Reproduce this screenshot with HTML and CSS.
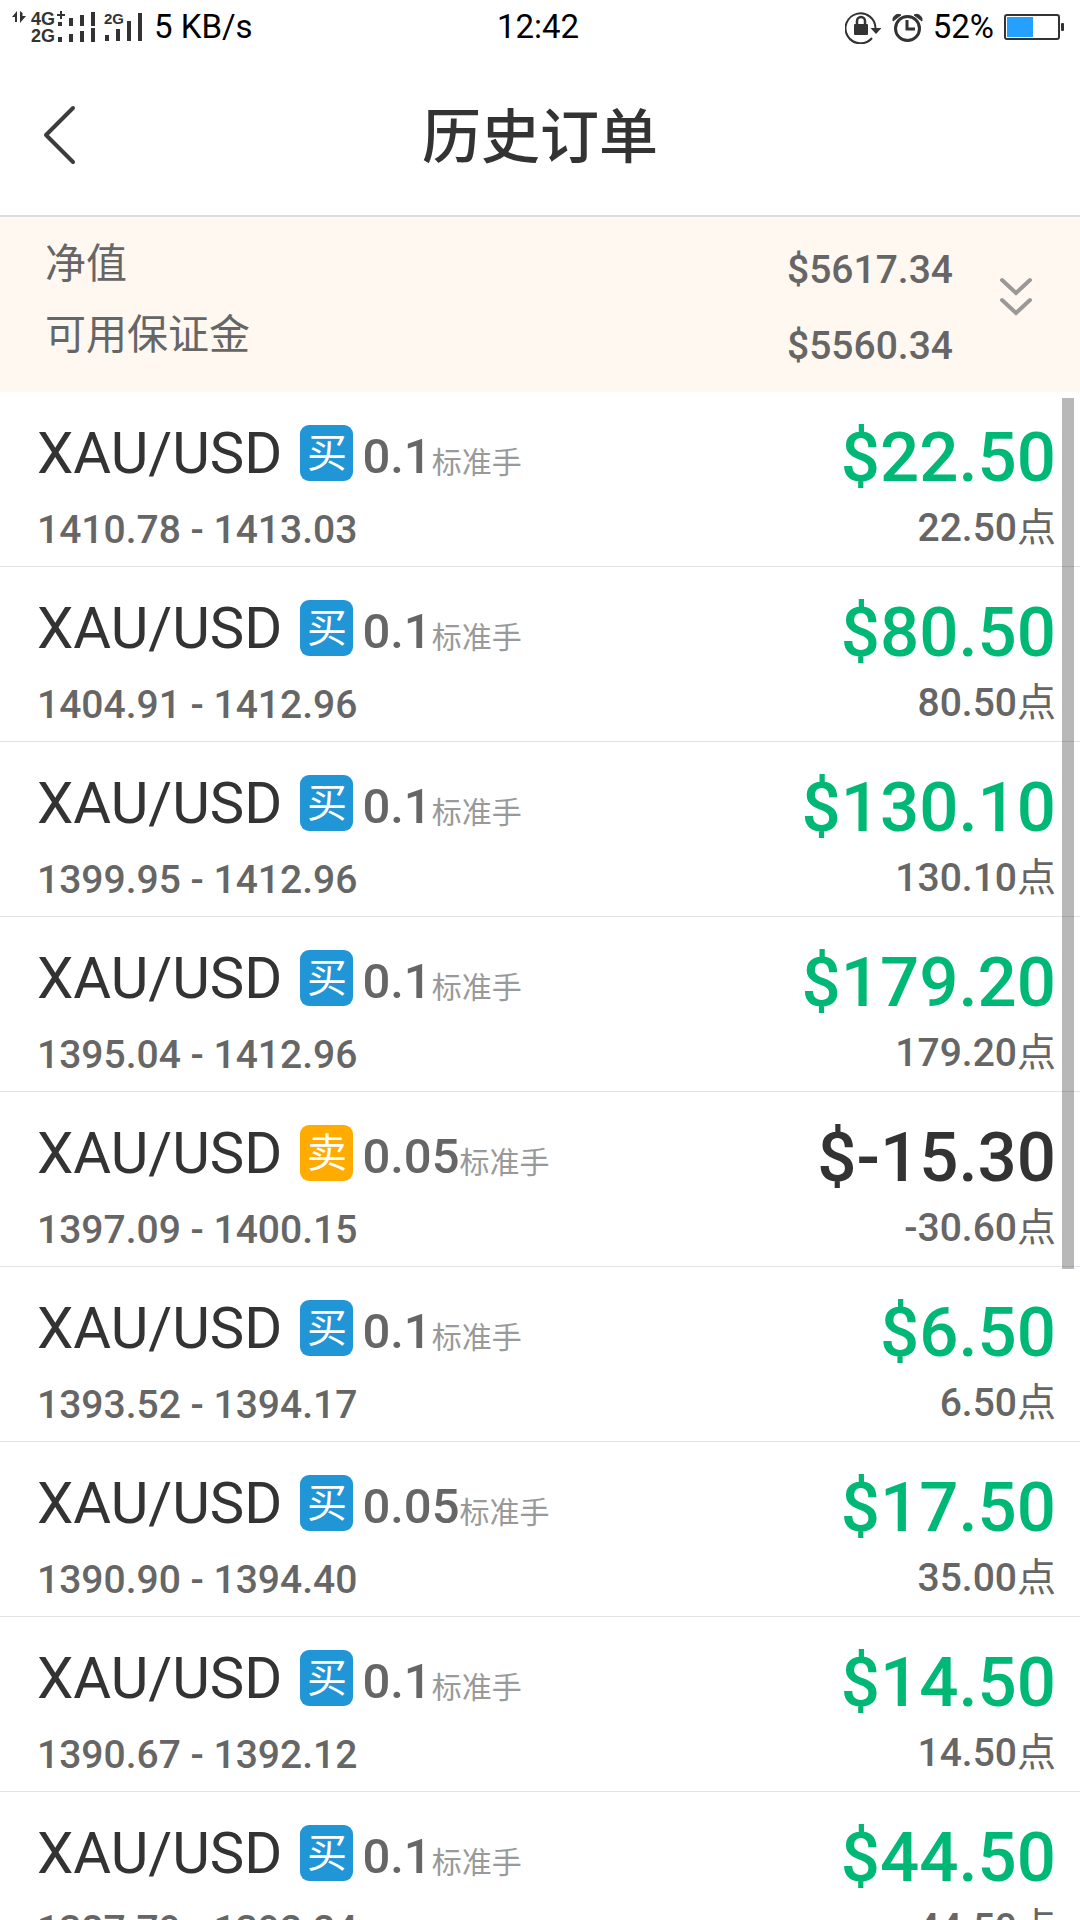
FILE: index.html
```html
<!DOCTYPE html>
<html lang="zh-CN">
<head>
<meta charset="utf-8">
<meta name="viewport" content="width=device-width">
<title>历史订单</title>
<link rel="stylesheet" href="styles.css">
</head>
<body>
<div class="status">
  <div class="status-side">
    <svg class="signal" width="132" height="42" viewBox="12 6 132 42" fill="#333">
      <path d="M12 17l5-6v11h-2v-5zM20 11v12l6-7h-3.500v-3z"/>
      <text x="31" y="25" class="net">4G</text>
      <text x="31" y="42" class="net">2G</text>
      <path d="M57 14h8v2h-8zM60 11h2v8h-2z"/>
      <path d="M58 22h4v4h-4zM69 18h4v8h-4zM80 15h4v11h-4zM91 12h4v14h-4zM58 37h4v5h-4zM69 34h4v8h-4zM80 31h4v11h-4zM91 28h4v14h-4z"/>
      <text x="104" y="24" class="net-small">2G</text>
      <path d="M105 35h4v6h-4zM116 29h4v12h-4zM127 21h4v20h-4zM138 13h4v28h-4z"/>
    </svg>
    <span>5 KB/s</span>
  </div>
  <time class="clock">12:42</time>
  <div class="status-side status-right">
    <svg width="36" height="34" viewBox="841 10 36 34">
      <path d="M868 38A15 15 0 1 1 871.500 29" fill="none" stroke="#333" stroke-width="2"/>
      <path d="M866.500 28h11l-5.500 6z" fill="#333"/>
      <rect x="850" y="24" width="14" height="11" rx="1" fill="#333"/>
      <path d="M853 25v-4a4 4 0 0 1 8 0v4" fill="none" stroke="#333" stroke-width="2.500"/>
    </svg>
    <svg width="32" height="32" viewBox="888 11 32 32" fill="none" stroke="#333">
      <circle cx="904.500" cy="28.500" r="12" stroke-width="3"/>
      <path d="M904 20v9h8" stroke-width="3"/>
      <path d="M890 21a5.500 5.500 0 0 1 8-6zM919 21a5.500 5.500 0 0 0-8-6z" fill="#333" stroke-width="1"/>
    </svg>
    <span>52%</span>
    <svg width="60" height="28" viewBox="1004 13 60 28">
      <rect x="1005" y="15" width="54" height="24" rx="2" fill="none" stroke="#333" stroke-width="2"/>
      <rect x="1007" y="17" width="26" height="20" fill="#26a0ff"/>
      <rect x="1061" y="23" width="3" height="8" rx="1" fill="#333"/>
    </svg>
  </div>
</div>

<header class="header">
  <button class="back" type="button" aria-label="返回">
    <svg width="36" height="62" viewBox="0 0 36 62" fill="none" stroke="#3c3c3c" stroke-width="4" stroke-linecap="round" stroke-linejoin="round"><path d="M31 4L4 31L31 58"/></svg>
  </button>
  <h1 class="title">历史订单</h1>
</header>

<section class="summary">
  <div class="summary-labels"><span>净值</span><span>可用保证金</span></div>
  <div class="summary-values"><span>$5617.34</span><span>$5560.34</span></div>
  <button class="expand" type="button" aria-label="展开">
    <svg width="34" height="42" viewBox="0 0 34 42" fill="none" stroke="#9b9998" stroke-width="4" stroke-linecap="round"><path d="M3 4L17 17L31 4M3 24L17 37L31 24"/></svg>
  </button>
</section>

<main class="orders">
  <ul class="list" id="list">
    <li class="row">
      <div class="deal"><div class="line"><span class="pair">XAU/USD</span><span class="tag">买</span><span class="lot">0.1</span><span class="unit">标准手</span></div><div class="range">1410.78 - 1413.03</div></div>
      <div class="result"><div class="profit">$22.50</div><div class="points">22.50<span class="cjk">点</span></div></div>
    </li>
    <li class="row">
      <div class="deal"><div class="line"><span class="pair">XAU/USD</span><span class="tag">买</span><span class="lot">0.1</span><span class="unit">标准手</span></div><div class="range">1404.91 - 1412.96</div></div>
      <div class="result"><div class="profit">$80.50</div><div class="points">80.50<span class="cjk">点</span></div></div>
    </li>
    <li class="row">
      <div class="deal"><div class="line"><span class="pair">XAU/USD</span><span class="tag">买</span><span class="lot">0.1</span><span class="unit">标准手</span></div><div class="range">1399.95 - 1412.96</div></div>
      <div class="result"><div class="profit">$130.10</div><div class="points">130.10<span class="cjk">点</span></div></div>
    </li>
    <li class="row">
      <div class="deal"><div class="line"><span class="pair">XAU/USD</span><span class="tag">买</span><span class="lot">0.1</span><span class="unit">标准手</span></div><div class="range">1395.04 - 1412.96</div></div>
      <div class="result"><div class="profit">$179.20</div><div class="points">179.20<span class="cjk">点</span></div></div>
    </li>
    <li class="row">
      <div class="deal"><div class="line"><span class="pair">XAU/USD</span><span class="tag sell">卖</span><span class="lot">0.05</span><span class="unit">标准手</span></div><div class="range">1397.09 - 1400.15</div></div>
      <div class="result"><div class="profit loss">$-15.30</div><div class="points">-30.60<span class="cjk">点</span></div></div>
    </li>
    <li class="row">
      <div class="deal"><div class="line"><span class="pair">XAU/USD</span><span class="tag">买</span><span class="lot">0.1</span><span class="unit">标准手</span></div><div class="range">1393.52 - 1394.17</div></div>
      <div class="result"><div class="profit">$6.50</div><div class="points">6.50<span class="cjk">点</span></div></div>
    </li>
    <li class="row">
      <div class="deal"><div class="line"><span class="pair">XAU/USD</span><span class="tag">买</span><span class="lot">0.05</span><span class="unit">标准手</span></div><div class="range">1390.90 - 1394.40</div></div>
      <div class="result"><div class="profit">$17.50</div><div class="points">35.00<span class="cjk">点</span></div></div>
    </li>
    <li class="row">
      <div class="deal"><div class="line"><span class="pair">XAU/USD</span><span class="tag">买</span><span class="lot">0.1</span><span class="unit">标准手</span></div><div class="range">1390.67 - 1392.12</div></div>
      <div class="result"><div class="profit">$14.50</div><div class="points">14.50<span class="cjk">点</span></div></div>
    </li>
    <li class="row">
      <div class="deal"><div class="line"><span class="pair">XAU/USD</span><span class="tag">买</span><span class="lot">0.1</span><span class="unit">标准手</span></div><div class="range">1387.79 - 1392.24</div></div>
      <div class="result"><div class="profit">$44.50</div><div class="points">44.50<span class="cjk">点</span></div></div>
    </li>
  </ul>
  <div class="scrollbar"></div>
</main>
</body>
</html>
```
FILE: styles.css
```css
* { box-sizing: border-box; }

body {
  margin: 0;
  height: 100vh;
  display: flex;
  flex-direction: column;
  overflow: hidden;
  background: #fff;
  color: #333;
  font-family: Roboto, "Noto Sans CJK SC", sans-serif;
}

button {
  padding: 0;
  border: 0;
  background: none;
  display: flex;
}

.status {
  flex: none;
  display: grid;
  grid-template-columns: 1fr auto 1fr;
  align-items: center;
  height: 54px;
  padding: 0 16px 0 12px;
  font-size: 33px;
  line-height: 54px;
  color: #000;
}

.status-side {
  display: flex;
  align-items: center;
  gap: 10px;
}

.status-right { justify-content: flex-end; }

.signal { overflow: visible; }

.net {
  font: bold 18px "Liberation Sans", sans-serif;
}

.net-small {
  font: bold 15px "Liberation Sans", sans-serif;
}

.header {
  flex: none;
  display: grid;
  grid-template-columns: 1fr auto 1fr;
  align-items: center;
  height: 163px;
  padding: 0 42px;
  border-bottom: 2px solid #dadce6;
}

.title {
  margin: 0;
  padding-bottom: 4px;
  font-family: "Noto Sans CJK SC", sans-serif;
  font-size: 59px;
  font-weight: 500;
  line-height: 80px;
}

.summary {
  flex: none;
  display: flex;
  align-items: flex-start;
  height: 175px;
  padding: 0 47px 0 45px;
  background: #fff8f1;
  color: #666;
}

.summary-labels,
.summary-values {
  display: flex;
  flex-direction: column;
}

.summary-labels {
  flex: 1;
  padding-top: 12px;
  font-size: 41px;
  line-height: 71px;
}

.summary-values {
  padding-top: 15px;
  font-size: 39px;
  font-weight: 500;
  line-height: 76px;
  text-align: right;
}

.expand {
  margin: 59px 0 0 46px;
}

.orders {
  position: relative;
  flex: 1;
  min-height: 0;
  overflow: hidden;
}

.list {
  margin: 0;
  padding: 0;
  list-style: none;
}

.row {
  display: flex;
  justify-content: space-between;
  height: 175px;
  padding: 0 24px 0 37px;
  border-bottom: 1px solid #e2e3e8;
}

.deal { padding-top: 25px; }

.line {
  display: flex;
  align-items: baseline;
  height: 72px;
  line-height: 72px;
}

.pair { font-size: 58px; }

.tag {
  align-self: center;
  width: 53px;
  height: 56px;
  margin: 0 9px 0 18px;
  border-radius: 9px;
  background: #2196d6;
  color: #fff;
  font-size: 40px;
  line-height: 58px;
  text-align: center;
}

.sell { background: #ffab00; }

.lot {
  font-size: 49px;
  font-weight: 500;
  color: #666;
}

.unit {
  font-size: 30px;
  color: #999;
}

.range {
  margin-top: 17px;
  font-size: 39px;
  font-weight: 500;
  line-height: 48px;
  color: #666;
}

.result {
  padding-top: 30px;
  text-align: right;
}

.profit {
  font-size: 69px;
  font-weight: 500;
  line-height: 72px;
  color: #00b876;
}

.loss { color: #333; }

.points {
  margin-top: 10px;
  font-size: 39px;
  font-weight: 500;
  line-height: 48px;
  color: #666;
}

.cjk { font-weight: 400; }

.scrollbar {
  position: absolute;
  top: 6px;
  right: 6px;
  width: 12px;
  height: 57%;
  background: rgba(0, 0, 0, 0.28);
}
```
